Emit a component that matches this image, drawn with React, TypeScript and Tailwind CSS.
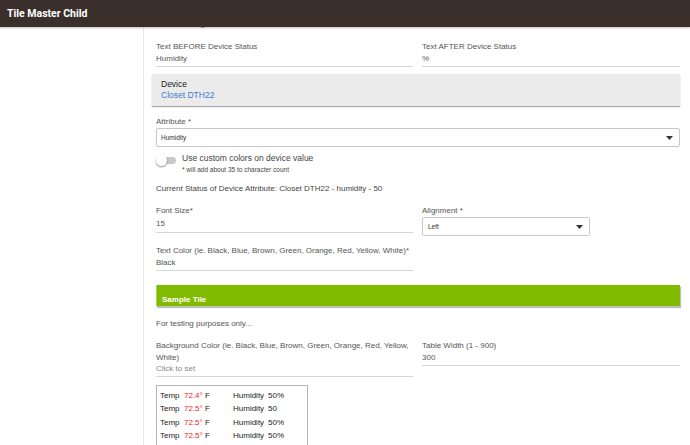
import React from "react";

function Field({ label, value, valueClass = "text-[#555]" }: { label: React.ReactNode; value: string; valueClass?: string }) {
  return (
    <div className="border-b border-[#d6d6d6] pb-[1px]">
      <div className="text-[8px] leading-[12px] text-[#555]">{label}</div>
      <div className={`text-[8px] leading-[12px] ${valueClass}`}>{value}</div>
    </div>
  );
}

function Caret() {
  return (
    <svg width="7" height="4" viewBox="0 0 7 4">
      <path d="M0 0h7L3.5 4z" fill="#333" />
    </svg>
  );
}

const rows = [
  { t: "72.4", h: "50%" },
  { t: "72.5", h: "50" },
  { t: "72.5", h: "50%" },
  { t: "72.5", h: "50%" },
];

export default function App() {
  return (
    <div className="w-[690px] h-[445px] overflow-hidden bg-white font-['Liberation_Sans',Arial,sans-serif]">
      <header className="relative z-10 h-[27px] bg-[#3a2f2b] pl-[7px] shadow-[0_1px_2px_rgba(0,0,0,0.25)]">
        <h1 className="font-['Roboto',sans-serif] text-[10.5px] font-bold leading-[27px] text-white">Tile Master Child</h1>
      </header>
      <div className="flex h-[418px]">
        <aside className="w-[143px] shrink-0 bg-white" />
        <main className="flex-1 border-l border-[#e8e8e8] pl-[12px] pr-[10px]">
          <div className="-mt-[9px] text-[8px] leading-[11px] text-[#888]">
            <span className="ml-[24px]">Settings</span>
          </div>

          <div className="mt-[12px] grid grid-cols-[257px_1fr] gap-x-[9px]">
            <Field label="Text BEFORE Device Status" value="Humidity" />
            <Field label="Text AFTER Device Status" value="%" />
          </div>

          <div className="-ml-[4px] mt-[7px] bg-[#ebebeb] pl-[9px] pt-[5px] pb-[5px] shadow-[0_1px_1px_rgba(0,0,0,0.35)]">
            <div className="text-[8.5px] leading-[11px] text-[#222]">Device</div>
            <div className="text-[8.5px] leading-[11px] text-[#3a7bd0]">Closet DTH22</div>
          </div>

          <div className="mt-[10px] text-[8px] leading-[12px] text-[#555]">Attribute *</div>
          <div className="flex h-[19px] items-center justify-between rounded-[2px] border border-[#c8c8c8] pl-[4px] pr-[6px]">
            <span className="text-[6.5px] text-[#333]">Humidity</span>
            <Caret />
          </div>

          <div className="mt-[5px] flex items-start gap-[6px]">
            <div className="relative mt-[3px] h-[11px] w-[20px]">
              <div className="absolute left-[3px] top-[2px] h-[7px] w-[17px] rounded-full bg-[#c9c9c9]" />
              <div className="absolute left-0 top-0 h-[11px] w-[11px] rounded-full bg-white shadow-[0_1px_2px_rgba(0,0,0,0.45)]" />
            </div>
            <div>
              <div className="text-[8.5px] leading-[13px] text-[#444]">Use custom colors on device value</div>
              <div className="text-[6.5px] leading-[10px] text-[#444]">* will add about 35 to character count</div>
            </div>
          </div>

          <div className="mt-[8px] text-[8px] leading-[12px] text-[#444]">
            Current Status of Device Attribute: Closet DTH22 - humidity - 50
          </div>

          <div className="mt-[10px] grid grid-cols-[257px_1fr] gap-x-[9px]">
            <div>
              <div className="border-b border-[#d6d6d6] pb-[1px]">
                <div className="text-[8px] leading-[12px] text-[#555]">Font Size*</div>
                <div className="text-[8px] leading-[14px] text-[#555]">15</div>
              </div>
              <div className="mt-[12px]">
                <Field label="Text Color (ie. Black, Blue, Brown, Green, Orange, Red, Yellow, White)*" value="Black" />
              </div>
            </div>
            <div>
              <div className="text-[8px] leading-[12px] text-[#555]">Alignment *</div>
              <div className="flex h-[19px] w-[168px] items-center justify-between rounded-[2px] border border-[#c8c8c8] pl-[5px] pr-[6px]">
                <span className="text-[6.5px] text-[#333]">Left</span>
                <Caret />
              </div>
            </div>
          </div>

          <div className="mt-[14px] h-[21px] border-l border-[#a8d55a] bg-[#80bb00] pl-[5px] shadow-[1px_2px_1px_rgba(0,0,0,0.25)]">
            <span className="text-[8px] font-bold leading-[21px] text-white">Sample Tile</span>
          </div>

          <div className="mt-[12px] text-[8px] leading-[12px] text-[#555]">For testing purposes only...</div>

          <div className="mt-[10px] grid grid-cols-[257px_1fr] items-start gap-x-[9px]">
            <div className="border-b border-[#d6d6d6] pb-[1px]">
              <div className="text-[8px] leading-[11.5px] text-[#555]">
                Background Color (ie. Black, Blue, Brown, Green, Orange, Red, Yellow, White)
              </div>
              <div className="text-[8px] leading-[12px] text-[#888]">Click to set</div>
            </div>
            <Field label="Table Width (1 - 900)" value="300" />
          </div>

          <div className="mt-[8px] w-[152px] border border-[#b5b5b5] px-[3px] py-[3px] shadow-[inset_0_0_1px_rgba(0,0,0,0.15)]">
            {rows.map((r, i) => (
              <div key={i} className="flex h-[13.5px] items-center text-[8px] text-[#222]">
                <span className="w-[24px]">Temp</span>
                <span className="w-[49px]">
                  <span className="text-[#ee2222]">{r.t}°</span> F
                </span>
                <span className="w-[35px]">Humidity</span>
                <span>{r.h}</span>
              </div>
            ))}
          </div>
        </main>
      </div>
    </div>
  );
}
